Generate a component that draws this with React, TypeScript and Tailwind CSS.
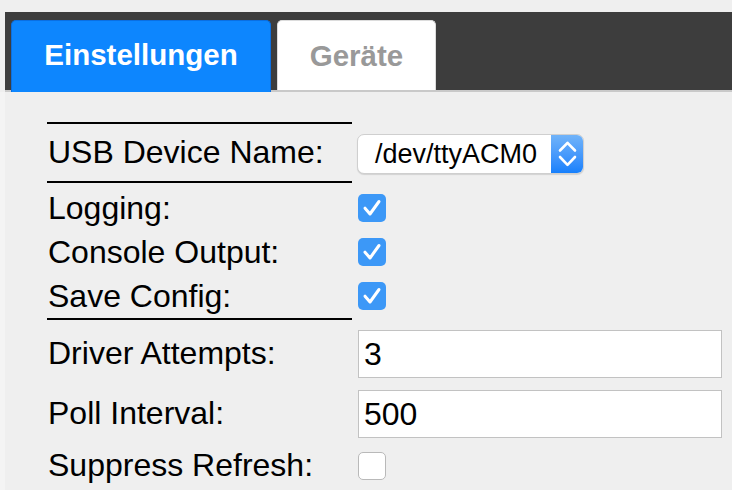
import React from "react";

function Check({ checked }: { checked: boolean }) {
  if (!checked) {
    return (
      <span className="block size-[28px] rounded-[5px] border border-[#b9b9b9] bg-white" />
    );
  }
  return (
    <span className="flex size-[28px] items-center justify-center rounded-[5px] bg-[#3c98f7]">
      <svg width="28" height="28" viewBox="0 0 28 28" fill="none">
        <path
          d="M7 14.2 L12 20 L21 7.5"
          stroke="white"
          strokeWidth="3"
          strokeLinecap="round"
          strokeLinejoin="round"
        />
      </svg>
    </span>
  );
}

function Rule() {
  return <div className="h-[2px] w-[305px] bg-black" />;
}

function Row({
  label,
  className,
  children,
}: {
  label: string;
  className: string;
  children: React.ReactNode;
}) {
  return (
    <div className={`flex items-center ${className}`}>
      <div className="w-[305px] pl-px text-[32px] leading-[1.15] text-black">{label}</div>
      <div className="flex flex-1 items-center pl-[6px]">{children}</div>
    </div>
  );
}

function TextField({ value }: { value: string }) {
  return (
    <div className="flex h-[48px] w-[364px] items-center border border-[#c2c2c2] bg-white pl-[5px] text-[32px] text-black">
      {value}
    </div>
  );
}

export default function App() {
  return (
    <div className="h-[490px] overflow-hidden bg-[#efefef] font-['Liberation_Sans',Arial,sans-serif]">
      <div className="h-3" />
      <div className="ml-[5px] flex h-[80px] items-end gap-[6px] border-b-2 border-[#c9c9c9] bg-[#3d3d3d] pl-[6px]">
        <div className="-mb-[2px] flex h-[72px] w-[260px] items-center justify-center rounded-t-[5px] border border-b-0 border-[#0a6fe2] bg-[#0d86fe] pb-[3px] text-[29.5px] font-bold text-white">
          Einstellungen
        </div>
        <div className="flex h-[70px] w-[159px] items-center justify-center rounded-t-[5px] border border-b-0 border-[#dcdcdc] bg-white pt-px text-[29.5px] font-bold text-[#999999]">
          Geräte
        </div>
      </div>

      <div className="border-l-[5px] border-[#f4f4f4] pl-[42px] pt-[30px]">
        <Rule />
        <div className="flex h-[57px] items-center">
          <div className="w-[305px] pl-px text-[32px] leading-[1.15] text-black">USB Device Name:</div>
          <div className="pl-[5px]">
            <div className="mt-[3px] flex h-[40px] w-[227px] overflow-hidden rounded-[7px] border border-[#cfcfcf] bg-white shadow-[0_1px_1px_rgba(0,0,0,0.12)]">
              <div className="flex flex-1 items-center pl-[17px] text-[27px] text-black">
                /dev/ttyACM0
              </div>
              <div className="flex w-[32px] items-center justify-center bg-linear-to-b from-[#70b3f9] to-[#1580fc]">
                <svg width="32" height="40" viewBox="0 0 32 40" fill="none">
                  <path
                    d="M9 16.5 L16.5 8.8 L24 16.5 M9 23 L16.5 30.8 L24 23"
                    stroke="white"
                    strokeWidth="2.6"
                    strokeLinecap="round"
                    strokeLinejoin="round"
                  />
                </svg>
              </div>
            </div>
          </div>
        </div>
        <Rule />
        <div className="pt-[3px]">
          <Row label="Logging:" className="h-[44px]">
            <Check checked />
          </Row>
          <Row label="Console Output:" className="h-[44px]">
            <Check checked />
          </Row>
          <Row label="Save Config:" className="h-[44px]">
            <Check checked />
          </Row>
        </div>
        <Rule />
        <Row label="Driver Attempts:" className="h-[67px]">
          <TextField value="3" />
        </Row>
        <Row label="Poll Interval:" className="h-[53px]">
          <TextField value="500" />
        </Row>
        <Row label="Suppress Refresh:" className="h-[51px]">
          <Check checked={false} />
        </Row>
      </div>
    </div>
  );
}
